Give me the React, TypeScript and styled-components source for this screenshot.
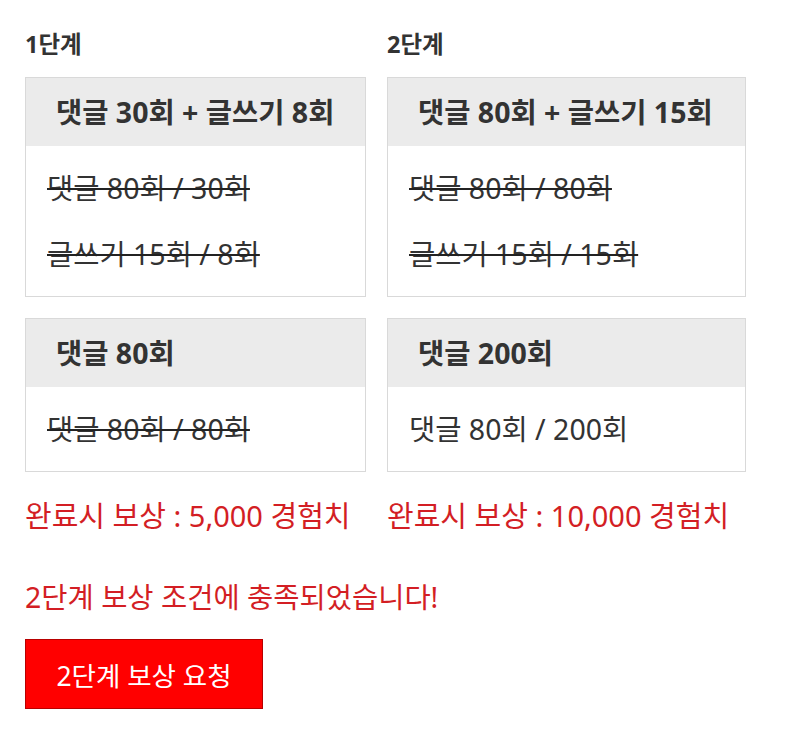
import React from 'react';
import styled, { createGlobalStyle } from 'styled-components';

const GlobalStyle = createGlobalStyle`
body {
  margin: 0;
  background: #fff;
  font-family: "Noto Sans", "Noto Sans CJK KR", sans-serif;
  color: #333;
}
`;

const StyledPage = styled.main`
padding: 28px 25px 40px;
`;

const StyledStages = styled.section`
display: grid;
grid-template-columns: 341px 359px;
column-gap: 21px;
`;

const StyledStage = styled.div`
display: flex;
flex-direction: column;
`;

const StyledStageTitle = styled.h3`
margin: 0 0 17px;
font-size: 23.5px;
line-height: 32px;
font-weight: 700;
color: #333;
`;

const StyledMission = styled.div`
border: 1px solid #d9d9d9;
margin-bottom: 21px;
`;

const StyledMissionHead = styled.div`
background: #ebebeb;
height: 68px;
line-height: 68px;
padding: 0 0 0 30px;
font-size: 28.5px;
font-weight: 700;
color: #333;
white-space: nowrap;
`;

const StyledMissionBody = styled.div`
padding: 9px 21px;
`;

const StyledProgress = styled.div<{ $done?: boolean }>`
font-size: 28.5px;
line-height: 66px;
color: #333;
white-space: nowrap;
text-decoration: ${p => (p.$done ? 'line-through' : 'none')};
text-decoration-thickness: 2px;
text-decoration-color: #222;
`;

const StyledReward = styled.div`
margin-top: 3px;
font-size: 29px;
line-height: 40px;
color: #d31e24;
white-space: nowrap;
`;

const StyledNotice = styled.p`
margin: 41px 0 22px;
font-size: 28.5px;
line-height: 40px;
color: #d31e24;
`;

const StyledRequestBtn = styled.button`
width: 238px;
height: 70px;
border: 1px solid #b80000;
background: #ff0000;
color: #fff;
font-family: inherit;
font-size: 26.5px;
cursor: pointer;
`;

interface IMission {
  title: string;
  rows: { text: string; done: boolean }[];
}

interface IStage {
  name: string;
  missions: IMission[];
  reward: string;
}

const stages: IStage[] = [
  {
    name: '1단계',
    missions: [
      {
        title: '댓글 30회 + 글쓰기 8회',
        rows: [
          { text: '댓글 80회 / 30회', done: true },
          { text: '글쓰기 15회 / 8회', done: true },
        ],
      },
      {
        title: '댓글 80회',
        rows: [{ text: '댓글 80회 / 80회', done: true }],
      },
    ],
    reward: '완료시 보상 : 5,000 경험치',
  },
  {
    name: '2단계',
    missions: [
      {
        title: '댓글 80회 + 글쓰기 15회',
        rows: [
          { text: '댓글 80회 / 80회', done: true },
          { text: '글쓰기 15회 / 15회', done: true },
        ],
      },
      {
        title: '댓글 200회',
        rows: [{ text: '댓글 80회 / 200회', done: false }],
      },
    ],
    reward: '완료시 보상 : 10,000 경험치',
  },
];

const App: React.FC = () => {
  return (
    <StyledPage>
      <GlobalStyle />
      <StyledStages>
        {stages.map(stage => (
          <StyledStage key={stage.name}>
            <StyledStageTitle>{stage.name}</StyledStageTitle>
            {stage.missions.map(m => (
              <StyledMission key={m.title}>
                <StyledMissionHead>{m.title}</StyledMissionHead>
                <StyledMissionBody>
                  {m.rows.map(r => (
                    <StyledProgress key={r.text} $done={r.done}>{r.text}</StyledProgress>
                  ))}
                </StyledMissionBody>
              </StyledMission>
            ))}
            <StyledReward>{stage.reward}</StyledReward>
          </StyledStage>
        ))}
      </StyledStages>
      <StyledNotice>2단계 보상 조건에 충족되었습니다!</StyledNotice>
      <StyledRequestBtn>2단계 보상 요청</StyledRequestBtn>
    </StyledPage>
  );
}

export default App;
